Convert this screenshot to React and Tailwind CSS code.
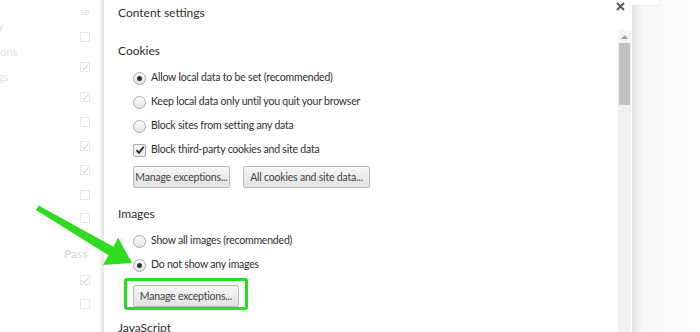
import React from "react";

const font = { fontFamily: 'Lato, "Noto Sans", Arial, sans-serif' };

function Radio({ checked }) {
  return (
    <span className="w-[13px] h-[13px] rounded-full border border-[#a8a8a8] bg-gradient-to-b from-[#fdfdfd] to-[#e4e4e4] flex items-center justify-center shrink-0">
      {checked && <span className="w-[5px] h-[5px] rounded-full bg-[#333]"></span>}
    </span>
  );
}

function Check() {
  return (
    <span className="w-[13px] h-[13px] border border-[#a8a8a8] rounded-[2px] bg-gradient-to-b from-[#fdfdfd] to-[#e8e8e8] flex items-center justify-center shrink-0">
      <svg width="10" height="10" viewBox="0 0 10 10">
        <path d="M1.5 5.2 L4 7.8 L8.7 1.8" fill="none" stroke="#222" strokeWidth="1.8" />
      </svg>
    </span>
  );
}

function Row({ children, control }) {
  return (
    <div className="h-6 flex items-center gap-[5px] pl-[15px] text-[10.5px] tracking-[-0.2px] text-[#2e2e2e] whitespace-nowrap">
      {control}
      <span>{children}</span>
    </div>
  );
}

function Btn({ children, w }) {
  return (
    <button className={`h-[22px] ${w} border border-[#b8b8b8] rounded-[2px] bg-gradient-to-b from-[#f6f6f6] to-[#e2e2e2] text-[10.5px] tracking-[-0.2px] text-[#444] leading-none whitespace-nowrap`}>
      {children}
    </button>
  );
}

function FaintBox({ checked, mt }) {
  return (
    <div className={`w-[10px] h-[10px] border border-[#e6e6e6] flex items-center justify-center ${mt}`}>
      {checked && (
        <svg width="9" height="9" viewBox="0 0 10 10">
          <path d="M1.5 5.2 L4 7.8 L8.7 1.8" fill="none" stroke="#d8d8d8" strokeWidth="1.6" />
        </svg>
      )}
    </div>
  );
}

export default function App() {
  return (
    <div className="w-[700px] h-[332px] relative overflow-hidden bg-white flex" style={font}>
      {/* background page, left */}
      <div className="w-[104px] h-full flex shrink-0 relative">
        <div className="flex-1 flex flex-col text-[11px] text-[#e0e0e0] pt-[18px] gap-[9px] -ml-[12px] whitespace-nowrap">
          <span className="ml-[6px]">ty</span>
          <span>ations</span>
          <span className="ml-[4px]">ngs</span>
        </div>
        <div className="w-[20px] flex flex-col items-start text-[10px] text-[#dadada]">
          <span className="mt-[5px] leading-[12px]">se</span>
          <FaintBox mt="mt-[15px]" />
          <FaintBox checked mt="mt-[20px]" />
          <FaintBox checked mt="mt-[20px]" />
          <FaintBox mt="mt-[15px]" />
          <FaintBox checked mt="mt-[14px]" />
          <FaintBox checked mt="mt-[14px]" />
          <FaintBox mt="mt-[15px]" />
          <FaintBox mt="mt-[13px]" />
          <span className="mt-[24px] -ml-[16px] text-[12px] leading-[14px] text-[#d4d4d4]">Pass</span>
          <FaintBox checked mt="mt-[14px]" />
          <FaintBox mt="mt-[14px]" />
        </div>
        <div className="w-[4px] h-full bg-gradient-to-r from-[#f6f6f6] to-[#e2e2e2]"></div>
      </div>

      {/* dialog */}
      <div className="w-[528px] h-full bg-white flex shrink-0">
        <div className="flex-1 pl-[14px] pt-[5px] text-[#2e2e2e]">
          <div className="text-[12px] leading-[16px]">Content settings</div>
          <div className="text-[12px] leading-[16px] mt-[22px]">Cookies</div>
          <div className="mt-[7px]">
            <Row control={<Radio checked />}>Allow local data to be set (recommended)</Row>
            <Row control={<Radio />}>Keep local data only until you quit your browser</Row>
            <Row control={<Radio />}>Block sites from setting any data</Row>
            <Row control={<Check />}>Block third-party cookies and site data</Row>
          </div>
          <div className="mt-[4px] pl-[15px] flex gap-[13px]">
            <Btn w="w-[97px]">Manage exceptions...</Btn>
            <Btn w="w-[127px]">All cookies and site data...</Btn>
          </div>
          <div className="text-[12px] leading-[16px] mt-[18px]">Images</div>
          <div className="mt-[7px]">
            <Row control={<Radio />}>Show all images (recommended)</Row>
            <Row control={<Radio checked />}>Do not show any images</Row>
          </div>
          <div className="mt-[1px] ml-[6px] w-[124px] h-[32px] border-[3px] border-[#22e11c] rounded-[3px] pt-[1px] pl-[6px]">
            <Btn w="w-[106px] h-[21px]">Manage exceptions...</Btn>
          </div>
          <div className="text-[12px] leading-[16px] mt-[10px]">JavaScript</div>
        </div>
        {/* close + scrollbar */}
        <div className="w-[14px] flex flex-col items-start">
          <div className="h-[30px] flex items-start pt-[2px] -ml-[2px]">
            <svg width="9" height="9" viewBox="0 0 9 9">
              <path d="M1 1 L8 8 M8 1 L1 8" stroke="#555" strokeWidth="1.8" />
            </svg>
          </div>
          <div className="w-[13px] flex-1 bg-[#f1f1f1] flex flex-col">
            <div className="h-[13px] flex items-center justify-center bg-[#f4f4f4]">
              <svg width="7" height="4" viewBox="0 0 7 4">
                <path d="M0 4 L3.5 0 L7 4 Z" fill="#a3a3a3" />
              </svg>
            </div>
            <div className="h-[62px] mx-[1px] bg-[#c1c1c1]"></div>
          </div>
        </div>
      </div>

      {/* background page, right */}
      <div className="flex-1 h-full bg-gradient-to-r from-[#e2e2e2] via-[#f8f8f8] via-[15%] to-[#fdfdfd] flex flex-col">
        <div className="w-[28px] h-[6px] bg-white border-r border-b border-[#ececec]"></div>
      </div>

      {/* green arrow annotation */}
      <svg className="absolute left-0 top-0 pointer-events-none" width="700" height="332" viewBox="0 0 700 332">
        <polygon
          points="36,210 38.5,205.5 113.5,246.7 118,237.5 132,263 103,265 108.5,255.3"
          fill="#2fdc22"
        />
      </svg>
    </div>
  );
}
